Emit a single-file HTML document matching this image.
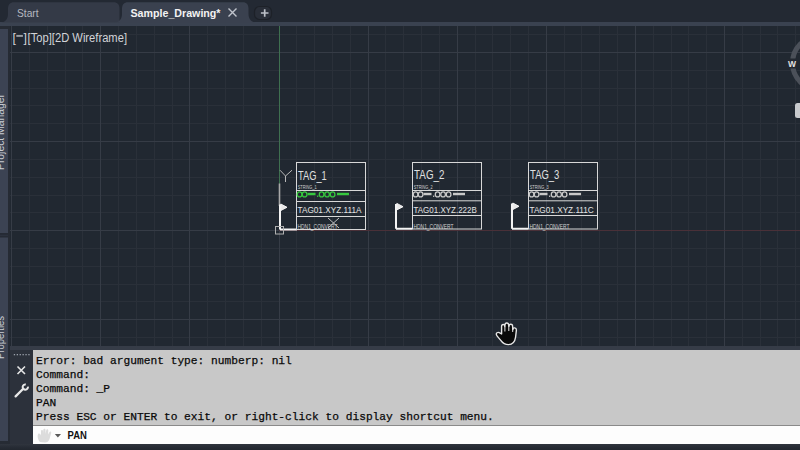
<!DOCTYPE html>
<html><head><meta charset="utf-8">
<style>
*{margin:0;padding:0;box-sizing:border-box}
html,body{width:800px;height:450px;overflow:hidden;background:#262b34;font-family:"Liberation Sans",sans-serif}
.a{position:absolute}
#tabbar{left:0;top:0;width:800px;height:26px;background:#232933}
#strip{left:0;top:21.5px;width:800px;height:4.5px;background:#3a4250}
.tab{top:2px;height:20px;background:#353a47;border-radius:7px 7px 0 0}
#canvas{left:10px;top:26px;width:790px;height:322px;background:#212831;overflow:hidden}
#lp{left:0;top:29px;width:8px;height:412px;background:#3c4353;overflow:hidden}
#cmd{left:10px;top:348px;width:790px;height:96px;background:#2c313b}
#out{left:33px;top:350px;width:767px;height:75px;background:#c8c8c8;font-family:"Liberation Mono",monospace;font-size:11.23px;line-height:14.1px;color:#0a0a0a;padding:3.8px 0 0 3px;-webkit-text-stroke:0.25px #0a0a0a;white-space:pre}
#inp{left:33px;top:426px;width:767px;height:18px;background:#fdfdfd}
#bot{left:0;top:443.5px;width:800px;height:6.5px;background:linear-gradient(#30353e,#272c35 50%,#22272f)}
svg text{font-family:"Liberation Sans",sans-serif}
</style></head><body>
<div class="a" id="tabbar"></div>
<div class="a" id="strip"></div>
<svg class="a" width="800" height="26" style="left:0;top:0">
<path d="M0 22.5 C5 22.5 8 19 8 14 V8.5 C8 4.5 10 2.2 14 2.2 H113.5 C117.5 2.2 119.5 4.5 119.5 8.5 V22.5 Z" fill="#343a47"/>
<path d="M114 22.5 C119 22.5 122 19 122 14 V8.5 C122 4.5 124 2.2 128 2.2 H243 C246.5 2.2 248.5 4.5 248.5 8.5 V14 C248.5 19 251.5 22.5 256.5 22.5 Z" fill="#3a414f"/>
<text x="17" y="17" font-size="11.5" textLength="21.6" lengthAdjust="spacingAndGlyphs" fill="#b4b8c0" font-weight="normal">Start</text>
<text x="130.5" y="17" font-size="11" textLength="90" lengthAdjust="spacingAndGlyphs" fill="#f2f2f2" font-weight="bold">Sample_Drawing*</text>
<path d="M228.5 8.5 L236.5 16.5 M236.5 8.5 L228.5 16.5" stroke="#c0c4cc" stroke-width="1.4"/>
<rect x="254.5" y="6.5" width="17" height="13" rx="5" fill="#292e38" stroke="#1d2128" stroke-width="1.2"/>
<path d="M264.7 9.2 V16.8 M260.9 13 H268.5" stroke="#bcc0c7" stroke-width="1.7"/>
</svg>
<div class="a" id="canvas">
<svg width="790" height="322" style="position:absolute;left:0;top:0">
<line x1="19.50" y1="0" x2="19.50" y2="322" stroke="#2a3039"/>
<line x1="37.50" y1="0" x2="37.50" y2="322" stroke="#2a3039"/>
<line x1="55.50" y1="0" x2="55.50" y2="322" stroke="#2a3039"/>
<line x1="72.50" y1="0" x2="72.50" y2="322" stroke="#2a3039"/>
<line x1="108.50" y1="0" x2="108.50" y2="322" stroke="#2a3039"/>
<line x1="126.50" y1="0" x2="126.50" y2="322" stroke="#2a3039"/>
<line x1="144.50" y1="0" x2="144.50" y2="322" stroke="#2a3039"/>
<line x1="162.50" y1="0" x2="162.50" y2="322" stroke="#2a3039"/>
<line x1="197.50" y1="0" x2="197.50" y2="322" stroke="#2a3039"/>
<line x1="215.50" y1="0" x2="215.50" y2="322" stroke="#2a3039"/>
<line x1="233.50" y1="0" x2="233.50" y2="322" stroke="#2a3039"/>
<line x1="251.50" y1="0" x2="251.50" y2="322" stroke="#2a3039"/>
<line x1="286.50" y1="0" x2="286.50" y2="322" stroke="#2a3039"/>
<line x1="304.50" y1="0" x2="304.50" y2="322" stroke="#2a3039"/>
<line x1="322.50" y1="0" x2="322.50" y2="322" stroke="#2a3039"/>
<line x1="340.50" y1="0" x2="340.50" y2="322" stroke="#2a3039"/>
<line x1="375.50" y1="0" x2="375.50" y2="322" stroke="#2a3039"/>
<line x1="393.50" y1="0" x2="393.50" y2="322" stroke="#2a3039"/>
<line x1="411.50" y1="0" x2="411.50" y2="322" stroke="#2a3039"/>
<line x1="429.50" y1="0" x2="429.50" y2="322" stroke="#2a3039"/>
<line x1="465.50" y1="0" x2="465.50" y2="322" stroke="#2a3039"/>
<line x1="482.50" y1="0" x2="482.50" y2="322" stroke="#2a3039"/>
<line x1="500.50" y1="0" x2="500.50" y2="322" stroke="#2a3039"/>
<line x1="518.50" y1="0" x2="518.50" y2="322" stroke="#2a3039"/>
<line x1="554.50" y1="0" x2="554.50" y2="322" stroke="#2a3039"/>
<line x1="571.50" y1="0" x2="571.50" y2="322" stroke="#2a3039"/>
<line x1="589.50" y1="0" x2="589.50" y2="322" stroke="#2a3039"/>
<line x1="607.50" y1="0" x2="607.50" y2="322" stroke="#2a3039"/>
<line x1="643.50" y1="0" x2="643.50" y2="322" stroke="#2a3039"/>
<line x1="661.50" y1="0" x2="661.50" y2="322" stroke="#2a3039"/>
<line x1="678.50" y1="0" x2="678.50" y2="322" stroke="#2a3039"/>
<line x1="696.50" y1="0" x2="696.50" y2="322" stroke="#2a3039"/>
<line x1="732.50" y1="0" x2="732.50" y2="322" stroke="#2a3039"/>
<line x1="750.50" y1="0" x2="750.50" y2="322" stroke="#2a3039"/>
<line x1="767.50" y1="0" x2="767.50" y2="322" stroke="#2a3039"/>
<line x1="785.50" y1="0" x2="785.50" y2="322" stroke="#2a3039"/>
<line x1="0" y1="8.50" x2="790" y2="8.50" stroke="#2a3039"/>
<line x1="0" y1="44.50" x2="790" y2="44.50" stroke="#2a3039"/>
<line x1="0" y1="62.50" x2="790" y2="62.50" stroke="#2a3039"/>
<line x1="0" y1="79.50" x2="790" y2="79.50" stroke="#2a3039"/>
<line x1="0" y1="97.50" x2="790" y2="97.50" stroke="#2a3039"/>
<line x1="0" y1="133.50" x2="790" y2="133.50" stroke="#2a3039"/>
<line x1="0" y1="151.50" x2="790" y2="151.50" stroke="#2a3039"/>
<line x1="0" y1="169.50" x2="790" y2="169.50" stroke="#2a3039"/>
<line x1="0" y1="186.50" x2="790" y2="186.50" stroke="#2a3039"/>
<line x1="0" y1="222.50" x2="790" y2="222.50" stroke="#2a3039"/>
<line x1="0" y1="240.50" x2="790" y2="240.50" stroke="#2a3039"/>
<line x1="0" y1="258.50" x2="790" y2="258.50" stroke="#2a3039"/>
<line x1="0" y1="275.50" x2="790" y2="275.50" stroke="#2a3039"/>
<line x1="0" y1="311.50" x2="790" y2="311.50" stroke="#2a3039"/>
<line x1="1.50" y1="0" x2="1.50" y2="322" stroke="#363c46"/>
<line x1="90.50" y1="0" x2="90.50" y2="322" stroke="#363c46"/>
<line x1="179.50" y1="0" x2="179.50" y2="322" stroke="#363c46"/>
<line x1="269.50" y1="0" x2="269.50" y2="322" stroke="#363c46"/>
<line x1="358.50" y1="0" x2="358.50" y2="322" stroke="#363c46"/>
<line x1="447.50" y1="0" x2="447.50" y2="322" stroke="#363c46"/>
<line x1="536.50" y1="0" x2="536.50" y2="322" stroke="#363c46"/>
<line x1="625.50" y1="0" x2="625.50" y2="322" stroke="#363c46"/>
<line x1="714.50" y1="0" x2="714.50" y2="322" stroke="#363c46"/>
<line x1="0" y1="26.50" x2="790" y2="26.50" stroke="#363c46"/>
<line x1="0" y1="115.50" x2="790" y2="115.50" stroke="#363c46"/>
<line x1="0" y1="204.50" x2="790" y2="204.50" stroke="#363c46"/>
<line x1="0" y1="293.50" x2="790" y2="293.50" stroke="#363c46"/>
</svg>
</div>
<svg class="a" width="800" height="450" style="left:0;top:0">
<g fill="#d2d4d8" font-size="12.3"><text x="12.6" y="41.8">[</text><rect x="16.3" y="35.3" width="6.6" height="1.3"/><text x="23.6" y="41.8">]</text></g>
<text x="27.6" y="41.8" font-size="12.3" textLength="99.4" lengthAdjust="spacingAndGlyphs" fill="#d2d4d8" font-weight="normal">[Top][2D Wireframe]</text>
<line x1="279.5" y1="26" x2="279.5" y2="184" stroke="#3f7050" stroke-width="1"/>
<line x1="279" y1="230.5" x2="800" y2="230.5" stroke="#4a3038" stroke-width="1"/>
<path d="M280 170.2 L285.5 176 L292 170.2 M285.5 176 V182" fill="none" stroke="#b8b8b8" stroke-width="1"/>
<line x1="279.5" y1="183.5" x2="279.5" y2="206" stroke="#a8a8a8" stroke-width="1.6"/>
<path d="M280 229.5 V204.5 M280 229.5 H297" fill="none" stroke="#f4f4f4" stroke-width="2"/>
<path d="M280.8 204 L287 207.3 L280.8 210.5 Z" fill="#e8e8e8" stroke="#f4f4f4" stroke-width="1"/>
<rect x="275.5" y="226.5" width="8" height="7.5" fill="none" stroke="#b0b0b0" stroke-width="1"/>
<path d="M328 218 L339 228 M339 218 L328 228" stroke="#cfcfcf" stroke-width="0.9"/>
<rect x="296.5" y="162.5" width="69.0" height="67.0" fill="none" stroke="#d8d8d8" stroke-width="1"/>
<line x1="296.5" y1="190.5" x2="365.5" y2="190.5" stroke="#d8d8d8" stroke-width="1"/>
<line x1="296.5" y1="201.5" x2="365.5" y2="201.5" stroke="#d8d8d8" stroke-width="1"/>
<line x1="296.5" y1="216.5" x2="365.5" y2="216.5" stroke="#d8d8d8" stroke-width="1"/>
<text x="298.1" y="180" font-size="12.6" textLength="28.6" lengthAdjust="spacingAndGlyphs" fill="#e0e0e0" font-weight="normal">TAG_1</text>
<text x="297.7" y="188.6" font-size="4.8" textLength="19" lengthAdjust="spacingAndGlyphs" fill="#cfcfcf" font-weight="normal">STRING_1</text>
<ellipse cx="299.6" cy="194.4" rx="2.3" ry="2.5" fill="none" stroke="#36c83e" stroke-width="1.3"/>
<ellipse cx="304.6" cy="194.4" rx="2.3" ry="2.5" fill="none" stroke="#36c83e" stroke-width="1.3"/>
<rect x="307.5" y="192.8" width="8" height="2.4" fill="#36c83e"/>
<rect x="317.0" y="195.6" width="1.3" height="1.3" fill="#36c83e"/>
<ellipse cx="321.6" cy="194.4" rx="2.3" ry="2.5" fill="none" stroke="#36c83e" stroke-width="1.3"/>
<ellipse cx="327.1" cy="194.4" rx="2.3" ry="2.5" fill="none" stroke="#36c83e" stroke-width="1.3"/>
<ellipse cx="332.6" cy="194.4" rx="2.3" ry="2.5" fill="none" stroke="#36c83e" stroke-width="1.3"/>
<rect x="337.0" y="192.8" width="12" height="2.4" fill="#36c83e"/>
<text x="297.5" y="212.6" font-size="9.4" textLength="64" lengthAdjust="spacingAndGlyphs" fill="#e4e4e4" font-weight="normal">TAG01.XYZ.111A</text>
<text x="297.5" y="229.2" font-size="6.6" textLength="40" lengthAdjust="spacingAndGlyphs" fill="#d0d0d0" font-weight="normal">HDN1_CONVERT</text>
<rect x="412.5" y="162.5" width="69.0" height="66.5" fill="none" stroke="#d8d8d8" stroke-width="1"/>
<line x1="412.5" y1="190.5" x2="481.5" y2="190.5" stroke="#d8d8d8" stroke-width="1"/>
<line x1="412.5" y1="200.8" x2="481.5" y2="200.8" stroke="#d8d8d8" stroke-width="1"/>
<line x1="412.5" y1="215.5" x2="481.5" y2="215.5" stroke="#d8d8d8" stroke-width="1"/>
<text x="414.1" y="179.1" font-size="12.6" textLength="30.3" lengthAdjust="spacingAndGlyphs" fill="#e0e0e0" font-weight="normal">TAG_2</text>
<text x="413.7" y="188.6" font-size="4.8" textLength="19" lengthAdjust="spacingAndGlyphs" fill="#cfcfcf" font-weight="normal">STRING_2</text>
<ellipse cx="415.6" cy="194.4" rx="2.3" ry="2.5" fill="none" stroke="#c8c8c8" stroke-width="1.3"/>
<ellipse cx="420.6" cy="194.4" rx="2.3" ry="2.5" fill="none" stroke="#c8c8c8" stroke-width="1.3"/>
<rect x="423.5" y="192.8" width="8" height="2.4" fill="#c8c8c8"/>
<rect x="433.0" y="195.6" width="1.3" height="1.3" fill="#c8c8c8"/>
<ellipse cx="437.6" cy="194.4" rx="2.3" ry="2.5" fill="none" stroke="#c8c8c8" stroke-width="1.3"/>
<ellipse cx="443.1" cy="194.4" rx="2.3" ry="2.5" fill="none" stroke="#c8c8c8" stroke-width="1.3"/>
<ellipse cx="448.6" cy="194.4" rx="2.3" ry="2.5" fill="none" stroke="#c8c8c8" stroke-width="1.3"/>
<rect x="453.0" y="192.8" width="12" height="2.4" fill="#c8c8c8"/>
<text x="413.5" y="212.6" font-size="9.4" textLength="63.3" lengthAdjust="spacingAndGlyphs" fill="#e4e4e4" font-weight="normal">TAG01.XYZ.222B</text>
<text x="413.5" y="229.2" font-size="6.6" textLength="40" lengthAdjust="spacingAndGlyphs" fill="#d0d0d0" font-weight="normal">HDN1_CONVERT</text>
<rect x="528.5" y="162.5" width="69.0" height="66.5" fill="none" stroke="#d8d8d8" stroke-width="1"/>
<line x1="528.5" y1="190.5" x2="597.5" y2="190.5" stroke="#d8d8d8" stroke-width="1"/>
<line x1="528.5" y1="200.8" x2="597.5" y2="200.8" stroke="#d8d8d8" stroke-width="1"/>
<line x1="528.5" y1="215.5" x2="597.5" y2="215.5" stroke="#d8d8d8" stroke-width="1"/>
<text x="530.1" y="179.1" font-size="12.6" textLength="29.3" lengthAdjust="spacingAndGlyphs" fill="#e0e0e0" font-weight="normal">TAG_3</text>
<text x="529.7" y="188.6" font-size="4.8" textLength="19" lengthAdjust="spacingAndGlyphs" fill="#cfcfcf" font-weight="normal">STRING_3</text>
<ellipse cx="531.6" cy="194.4" rx="2.3" ry="2.5" fill="none" stroke="#c8c8c8" stroke-width="1.3"/>
<ellipse cx="536.6" cy="194.4" rx="2.3" ry="2.5" fill="none" stroke="#c8c8c8" stroke-width="1.3"/>
<rect x="539.5" y="192.8" width="8" height="2.4" fill="#c8c8c8"/>
<rect x="549.0" y="195.6" width="1.3" height="1.3" fill="#c8c8c8"/>
<ellipse cx="553.6" cy="194.4" rx="2.3" ry="2.5" fill="none" stroke="#c8c8c8" stroke-width="1.3"/>
<ellipse cx="559.1" cy="194.4" rx="2.3" ry="2.5" fill="none" stroke="#c8c8c8" stroke-width="1.3"/>
<ellipse cx="564.6" cy="194.4" rx="2.3" ry="2.5" fill="none" stroke="#c8c8c8" stroke-width="1.3"/>
<rect x="569.0" y="192.8" width="12" height="2.4" fill="#c8c8c8"/>
<text x="529.5" y="212.6" font-size="9.4" textLength="64.3" lengthAdjust="spacingAndGlyphs" fill="#e4e4e4" font-weight="normal">TAG01.XYZ.111C</text>
<text x="529.5" y="229.2" font-size="6.6" textLength="40" lengthAdjust="spacingAndGlyphs" fill="#d0d0d0" font-weight="normal">HDN1_CONVERT</text>
<path d="M396 228.8 V203.9 M396 228.8 H412.3" fill="none" stroke="#f4f4f4" stroke-width="2"/>
<path d="M396.8 203.4 L403 206.70000000000002 L396.8 209.9 Z" fill="#e8e8e8" stroke="#f4f4f4" stroke-width="1"/>
<path d="M512 228.8 V203.5 M512 228.8 H528.3" fill="none" stroke="#f4f4f4" stroke-width="2"/>
<path d="M512.8 203 L519 206.3 L512.8 209.5 Z" fill="#e8e8e8" stroke="#f4f4f4" stroke-width="1"/>
</svg>
<div class="a" id="lp"></div>
<svg class="a" width="10" height="450" style="left:0;top:0">
<rect x="0" y="233" width="8" height="4.5" fill="#252a34"/><rect x="0" y="234.8" width="8" height="1" fill="#2d3340"/>
<text transform="translate(3.6 170) rotate(-90)" font-size="11" textLength="76" lengthAdjust="spacingAndGlyphs" fill="#c9ccd2">Project Manager</text>
<text transform="translate(3.6 359) rotate(-90)" font-size="11" textLength="43" lengthAdjust="spacingAndGlyphs" fill="#c9ccd2">Properties</text>
</svg>
<div class="a" id="cmd"></div>
<div class="a" style="left:10px;top:346px;width:790px;height:4px;background:#363c47"></div>
<div class="a" style="left:33px;top:350px;width:767px;height:1.5px;background:#d6d8d9"></div>
<div class="a" id="out">Error: bad argument type: numberp: nil
Command:
Command: _P
PAN
Press ESC or ENTER to exit, or right-click to display shortcut menu.</div>
<div class="a" id="inp"></div>
<div class="a" style="left:33px;top:424.5px;width:767px;height:1.5px;background:#8a8a8a"></div>
<svg class="a" width="800" height="450" style="left:0;top:0">
<g fill="#9aa0aa">
<rect x="13.8" y="354" width="1.3" height="1.3"/><rect x="16.7" y="354" width="1.3" height="1.3"/><rect x="19.6" y="354" width="1.3" height="1.3"/>
<rect x="22.5" y="354" width="1.3" height="1.3"/><rect x="25.4" y="354" width="1.3" height="1.3"/><rect x="28.3" y="354" width="1.3" height="1.3"/>
</g>
<path d="M17.5 366.5 L25 374 M25 366.5 L17.5 374" stroke="#e6e6e6" stroke-width="1.6"/>
<path d="M15.6 396.4 L23.2 388.8" stroke="#e8e8e8" stroke-width="2.3" stroke-linecap="round"/>
<path d="M27.9 386.6 A2.65 2.65 0 1 1 25.8 384.5" fill="none" stroke="#e8e8e8" stroke-width="2"/>
<path d="M40 442 C38 440 37 436 38.2 434 C39 433 40.5 434 41 435.5 L41 431 C41 429.5 43 429.5 43 431 L43 434 L43.3 429.8 C43.5 428.3 45.5 428.3 45.5 429.8 L45.5 434 L46.2 430.3 C46.5 429 48.3 429 48.3 430.5 L48 434.5 L49.5 432 C50 431 51.6 431.5 51.2 433 L49.5 439 C48.8 441.5 47 442.5 45 442.5 Z" fill="#dcdcdc"/>
<path d="M54.8 434 L61 434 L57.9 437.5 Z" fill="#5a5a5a"/>
<text x="67.6" y="439.3" font-size="10.8" font-weight="bold" textLength="19.3" lengthAdjust="spacingAndGlyphs" fill="#111">PAN</text>
<path d="M496.4 334.6 C496 333 497.6 332 499.2 332.6 L501.6 334 L501.6 326.6 C501.6 323.8 504.8 323.8 504.8 326.6 L505 325 C505 322.3 508.6 322.3 508.6 325 L509 326.2 C509 323.6 512.6 323.6 512.6 326.2 L512.8 329.6 C513 327.3 516.4 327.3 516.4 330 L515.6 337 C514.9 342 512.5 344.6 508.5 344.6 C505 344.6 503 343.5 501 340.6 L497.6 336.6 C497 336 496.6 335.3 496.4 334.6 Z" fill="#0a0a0a" stroke="#e6e6e6" stroke-width="1.4" stroke-linejoin="round"/>
<path d="M504.9 326.5 V331.5 M508.8 325.5 V331 M512.7 328.5 V332" stroke="#e6e6e6" stroke-width="1"/>
<circle cx="819.2" cy="63" r="26.7" fill="none" stroke="#4b5059" stroke-width="5"/>
<rect x="787" y="58.5" width="10" height="10" fill="#232831"/>
<text x="788" y="67" font-size="8.5" font-weight="bold" textLength="8" lengthAdjust="spacingAndGlyphs" fill="#e2e2e2">W</text>
<rect x="795" y="103" width="12" height="15" rx="2.5" fill="#c8cacd"/>
</svg>
<div class="a" id="bot"></div>
</body></html>
